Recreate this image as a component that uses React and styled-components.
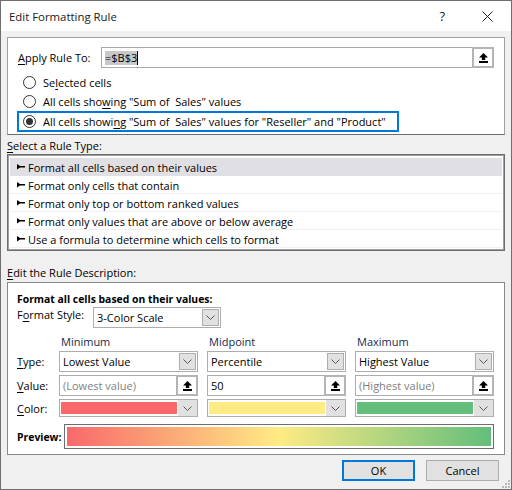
import React from 'react';
import styled, { createGlobalStyle } from 'styled-components';

const GlobalStyle = createGlobalStyle`
  html, body, #root {
    margin: 0;
    padding: 0;
    background: #f0f0f0;
  }
  u {
    text-underline-offset: 2px;
  }
`;

const UploadIcon = () => (
  <svg width="9" height="10" viewBox="0 0 9 10">
    <path d="M4.5 0 L9 4.5 L6.2 4.5 L6.2 7 L2.8 7 L2.8 4.5 L0 4.5 Z" fill="#000" />
    <rect x="0" y="8" width="9" height="2" fill="#000" />
  </svg>
);

const Chevron = () => (
  <svg width="9" height="5" viewBox="0 0 9 5">
    <path d="M0.5 0.5 L4.5 4.5 L8.5 0.5" fill="none" stroke="#555" strokeWidth="1" />
  </svg>
);

const RuleArrow = () => (
  <svg width="8" height="6" viewBox="0 0 8 6">
    <path d="M0 0 L3 2 L8 2 L8 3.5 L3 3.5 L0 5.5 Z" fill="#000" />
  </svg>
);

function Select({ value, $color }) {
  return (
    <SelectBox>
      {$color ? <ColorFill $color={$color} /> : <SelectText>{value}</SelectText>}
      <SelectButton $flush={!!$color}><Chevron /></SelectButton>
    </SelectBox>
  );
}

function ValueInput({ value, $muted }) {
  return (
    <InputBox>
      <ValueText $muted={$muted}>{value}</ValueText>
      <RefButton><UploadIcon /></RefButton>
    </InputBox>
  );
}

const rules = [
  'Format all cells based on their values',
  'Format only cells that contain',
  'Format only top or bottom ranked values',
  'Format only values that are above or below average',
  'Use a formula to determine which cells to format',
];

export default function App() {
  return (
    <>
      <GlobalStyle />
      <Dialog>
        <TitleBar>
          <Title>Edit Formatting Rule</Title>
          <TitleButtons>
            <HelpMark>?</HelpMark>
            <svg width="11" height="11" viewBox="0 0 11 11">
              <path d="M0.5 0.5 L10.5 10.5 M10.5 0.5 L0.5 10.5" stroke="#222" strokeWidth="1" />
            </svg>
          </TitleButtons>
        </TitleBar>
        <Body>
          <ApplyPanel>
            <ApplyRow>
              <ApplyLabel><u>A</u>pply Rule To:</ApplyLabel>
              <RangeInput>
                <RangeText><Selected>=$B$3</Selected><Caret /></RangeText>
                <RefButton><UploadIcon /></RefButton>
              </RangeInput>
            </ApplyRow>
            <RadioRow>
              <Radio />
              <span>Se<u>l</u>ected cells</span>
            </RadioRow>
            <RadioRow>
              <Radio />
              <span>All cells sho<u>w</u>ing "Sum of&nbsp; Sales" values</span>
            </RadioRow>
            <RadioRow $focused>
              <Radio $checked />
              <span>All cells showi<u>n</u>g "Sum of&nbsp; Sales" values for "Reseller" and "Product"</span>
            </RadioRow>
          </ApplyPanel>

          <SectionLabel><u>S</u>elect a Rule Type:</SectionLabel>
          <RuleList>
            {rules.map((rule, i) => (
              <RuleItem key={rule} $active={i === 0}>
                <RuleArrow />
                <span>{rule}</span>
              </RuleItem>
            ))}
          </RuleList>

          <DescriptionLabel><u>E</u>dit the Rule Description:</DescriptionLabel>
          <DescriptionPanel>
            <BoldLine>Format all cells based on their values:</BoldLine>
            <StyleRow>
              <StyleLabel>F<u>o</u>rmat Style:</StyleLabel>
              <StyleSelect><Select value="3-Color Scale" /></StyleSelect>
            </StyleRow>
            <ScaleGrid>
              <span />
              <ColumnHead>Minimum</ColumnHead>
              <ColumnHead>Midpoint</ColumnHead>
              <ColumnHead>Maximum</ColumnHead>

              <RowLabel><u>T</u>ype:</RowLabel>
              <Select value="Lowest Value" />
              <Select value="Percentile" />
              <Select value="Highest Value" />

              <RowLabel><u>V</u>alue:</RowLabel>
              <ValueInput value="(Lowest value)" $muted />
              <ValueInput value="50" />
              <ValueInput value="(Highest value)" $muted />

              <RowLabel><u>C</u>olor:</RowLabel>
              <Select $color="#f8696b" />
              <Select $color="#ffeb84" />
              <Select $color="#63be7b" />
            </ScaleGrid>
            <PreviewRow>
              <PreviewLabel>Preview:</PreviewLabel>
              <PreviewFrame><PreviewBar /></PreviewFrame>
            </PreviewRow>
          </DescriptionPanel>

          <Footer>
            <DialogButton $primary>OK</DialogButton>
            <DialogButton>Cancel</DialogButton>
          </Footer>
        </Body>
        <Grip>
          <svg width="8" height="8" viewBox="0 0 8 8">
            <path d="M6 0h2v2H6zM3 3h2v2H3zM6 3h2v2H6zM0 6h2v2H0zM3 6h2v2H3zM6 6h2v2H6z" fill="#b8b8b8" />
          </svg>
        </Grip>
      </Dialog>
    </>
  );
}

const Dialog = styled.div`
  position: relative;
  width: 512px;
  height: 490px;
  box-sizing: border-box;
  border: 1px solid #6f6f6f;
  background: #f0f0f0;
  font-family: "Open Sans", "Noto Sans", sans-serif;
  font-size: 11px;
  color: #000;
  overflow: hidden;
`;

const TitleBar = styled.div`
  display: flex;
  align-items: center;
  justify-content: space-between;
  height: 30px;
  padding: 0 18px 0 8px;
  background: #fff;
`;

const Title = styled.div`
  font-size: 11.4px;
  color: #1a1a1a;
`;

const TitleButtons = styled.div`
  display: flex;
  align-items: center;
  gap: 37px;
`;

const HelpMark = styled.span`
  font-size: 13px;
  color: #222;
`;

const Body = styled.div`
  padding: 6px 6px 0;
`;

const ApplyPanel = styled.div`
  box-sizing: border-box;
  width: 498px;
  height: 98px;
  padding: 9px 0 0 10px;
  background: #fff;
  border: 1px solid #a0a0a0;
  border-bottom-color: #6d6d6d;
`;

const ApplyRow = styled.div`
  display: flex;
  align-items: center;
  height: 21px;
  margin-bottom: 5px;
`;

const ApplyLabel = styled.div`
  width: 83px;
`;

const RangeInput = styled.div`
  display: flex;
  box-sizing: border-box;
  width: 393px;
  height: 21px;
  border: 1px solid #a9a9a9;
`;

const RangeText = styled.div`
  flex: 1;
  display: flex;
  align-items: center;
  padding-left: 3px;
`;

const Selected = styled.span`
  background: #c8c8c8;
  line-height: 14px;
`;

const Caret = styled.span`
  width: 1px;
  height: 14px;
  background: #000;
`;

const RadioRow = styled.div`
  display: flex;
  align-items: center;
  gap: 7px;
  box-sizing: border-box;
  width: 382px;
  height: ${({ $focused }) => ($focused ? '21px' : '19px')};
  padding-left: 4px;
  margin-left: -1px;
  border: 2px solid ${({ $focused }) => ($focused ? '#0078d7' : 'transparent')};
`;

const Radio = styled.span`
  position: relative;
  flex: none;
  box-sizing: border-box;
  width: 13px;
  height: 13px;
  border: 1px solid #333;
  border-radius: 50%;
  background: #fff;

  &::after {
    content: '';
    display: ${({ $checked }) => ($checked ? 'block' : 'none')};
    position: absolute;
    inset: 2px;
    border-radius: 50%;
    background: #333;
  }
`;

const SectionLabel = styled.div`
  height: 19px;
  line-height: 21px;
`;

const RuleList = styled.div`
  box-sizing: border-box;
  width: 498px;
  height: 97px;
  padding: 3px 2px 0;
  background: #fff;
  border: 1px solid #6d6d6d;
  outline: 1px solid #a0a0a0;
  outline-offset: -2px;
`;

const RuleItem = styled.div`
  display: flex;
  align-items: center;
  gap: 3px;
  height: 18px;
  padding: 1px 0 0 7px;
  background: ${({ $active }) => ($active ? '#e0dfe3' : '#fff')};
  border-bottom: 1px solid ${({ $active }) => ($active ? '#e0dfe3' : '#f0f0f0')};
  box-sizing: border-box;
`;

const DescriptionLabel = styled.div`
  height: 31px;
  padding-top: 13px;
  box-sizing: border-box;
  line-height: 18px;
`;

const DescriptionPanel = styled.div`
  box-sizing: border-box;
  width: 498px;
  height: 173px;
  padding: 8px 10px 0 9px;
  background: #fff;
  border: 1px solid #8a8a8a;
`;

const BoldLine = styled.div`
  font-weight: 700;
  font-size: 10.4px;
  height: 16px;
  line-height: 16px;
`;

const StyleRow = styled.div`
  display: flex;
  height: 21px;
`;

const StyleLabel = styled.div`
  width: 76px;
  line-height: 16px;
`;

const StyleSelect = styled.div`
  width: 128px;
`;

const ScaleGrid = styled.div`
  display: grid;
  grid-template-columns: 33px 139px 139px 139px;
  grid-template-rows: 16px 21px 21px 18px;
  column-gap: 9px;
  row-gap: 3px;
  margin-top: 4px;
  align-items: center;
`;

const ColumnHead = styled.div`
  color: #152a50;
  padding-left: 2px;
  line-height: 12px;
  align-self: end;
`;

const RowLabel = styled.div``;

const SelectBox = styled.div`
  display: flex;
  align-items: stretch;
  box-sizing: border-box;
  height: 100%;
  border: 1px solid #adadad;
  background: #fff;
`;

const SelectText = styled.div`
  flex: 1;
  padding-left: 3px;
  display: flex;
  align-items: center;
`;

const ColorFill = styled.div`
  flex: 1;
  margin: 2px 1px;
  background: ${({ $color }) => $color};
`;

const SelectButton = styled.div`
  display: flex;
  align-items: center;
  justify-content: center;
  box-sizing: border-box;
  width: ${({ $flush }) => ($flush ? '19px' : '17px')};
  margin: ${({ $flush }) => ($flush ? '0' : '1px')};
  background: #e1e1e1;
  border: ${({ $flush }) => ($flush ? 'none' : '1px solid #adadad')};
`;

const InputBox = styled.div`
  display: flex;
  box-sizing: border-box;
  height: 100%;
  border: 1px solid #adadad;
  background: #fff;
`;

const ValueText = styled.div`
  flex: 1;
  display: flex;
  align-items: center;
  padding-left: 3px;
  color: ${({ $muted }) => ($muted ? '#7f7f7f' : '#000')};
`;

const RefButton = styled.div`
  display: flex;
  align-items: center;
  justify-content: center;
  box-sizing: border-box;
  width: 22px;
  margin: -1px;
  background: #fff;
  border: 2px solid #b4b4b4;
`;

const PreviewRow = styled.div`
  display: flex;
  align-items: center;
  margin-top: 7px;
`;

const PreviewLabel = styled.div`
  width: 47px;
  font-weight: 700;
  font-size: 10.4px;
`;

const PreviewFrame = styled.div`
  box-sizing: border-box;
  width: 430px;
  height: 25px;
  padding: 2px;
  border: 1px solid #6d6d6d;
  background: #fff;
`;

const PreviewBar = styled.div`
  height: 100%;
  background: linear-gradient(to right, #f8696b, #ffeb84 50%, #63be7b);
`;

const Footer = styled.div`
  display: flex;
  gap: 11px;
  margin-top: 5px;
  padding-left: 335px;
`;

const DialogButton = styled.div`
  display: flex;
  align-items: center;
  justify-content: center;
  box-sizing: border-box;
  width: 73px;
  height: 21px;
  background: #e1e1e1;
  border: ${({ $primary }) => ($primary ? '2px solid #0078d7' : '1px solid #adadad')};
`;

const Grip = styled.div`
  position: absolute;
  right: 1px;
  bottom: 1px;
  line-height: 0;
`;
